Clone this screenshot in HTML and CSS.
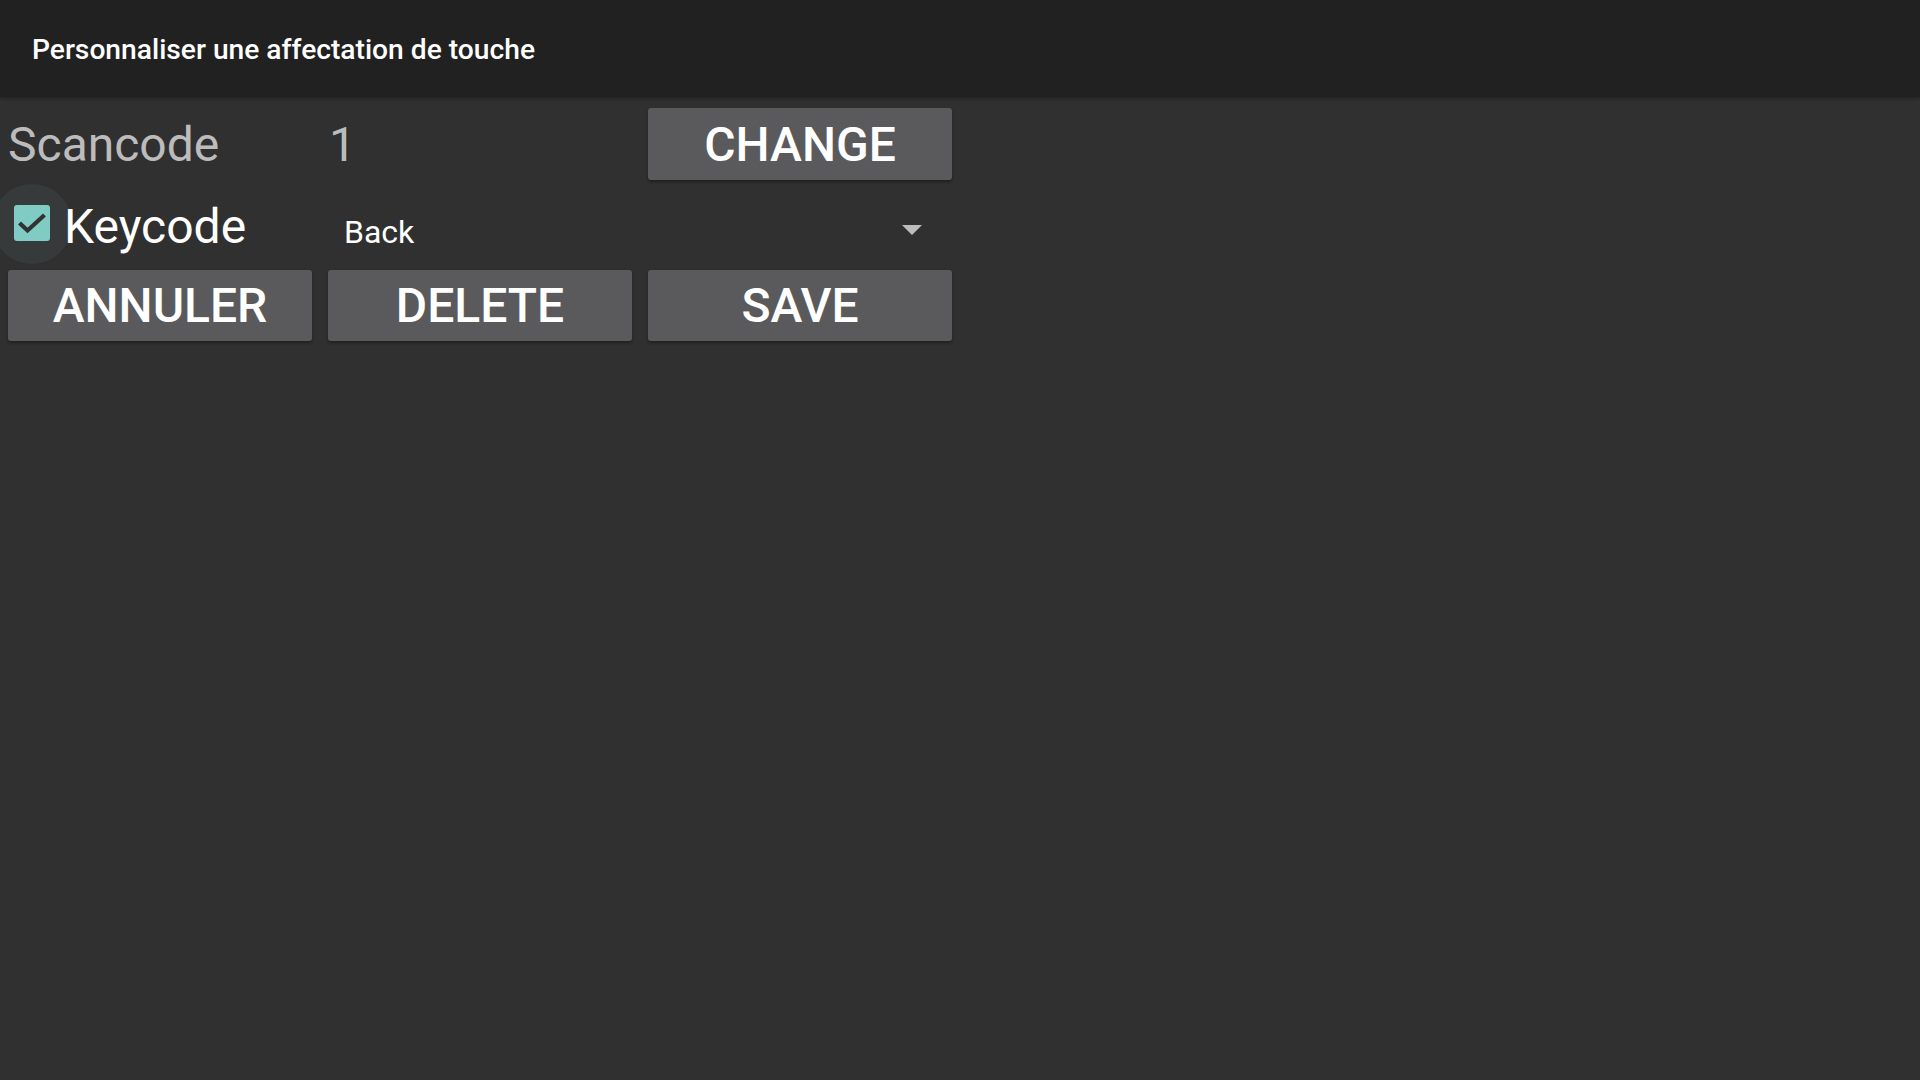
FILE: index.html
```html
<!DOCTYPE html>
<html lang="fr">
<head>
<meta charset="utf-8">
<title>Personnaliser une affectation de touche</title>
<link rel="stylesheet" href="styles.css">
</head>
<body>
<header class="appbar">
  <h1 class="appbar-title">Personnaliser une affectation de touche</h1>
</header>
<main class="form">
  <div class="row row-scan">
    <div class="label label-muted">Scancode</div>
    <div class="value">1</div>
    <button class="btn">CHANGE</button>
  </div>
  <div class="row row-key">
    <label class="check">
      <span class="ripple"></span>
      <span class="box">
        <svg viewBox="0 0 36 36" width="36" height="36"><path d="M5.5 18 L13.5 25.5 L30.5 10" fill="none" stroke="#323232" stroke-width="4.2"/></svg>
      </span>
      <span class="label">Keycode</span>
    </label>
    <div class="spinner">
      <span class="spinner-text">Back</span>
      <span class="arrow"></span>
    </div>
  </div>
  <div class="row row-actions">
    <button class="btn">ANNULER</button>
    <button class="btn">DELETE</button>
    <button class="btn">SAVE</button>
  </div>
</main>
</body>
</html>
```
FILE: styles.css
```css
* { box-sizing: border-box; }
html, body {
  margin: 0;
  padding: 0;
  width: 1920px;
  height: 1080px;
  background: #303030;
  font-family: Roboto, "Noto Sans", "Liberation Sans", sans-serif;
  overflow: hidden;
}
.appbar {
  height: 97px;
  background: #212121;
  display: flex;
  align-items: center;
  padding-left: 32px;
  box-shadow: 0 2px 3px rgba(0,0,0,0.25);
  position: relative;
  z-index: 1;
}
.appbar-title {
  margin: 0;
  padding-top: 2px;
  font-size: 28.2px;
  font-weight: 500;
  color: #ffffff;
  letter-spacing: 0;
}
.form {
  width: 960px;
  display: flex;
  flex-direction: column;
}
.row {
  display: grid;
  grid-template-columns: 320px 320px 320px;
  align-items: center;
}
.row-scan { height: 91px; padding-top: 1px; }
.row-key { height: 72px; }
.row-actions { height: 90px; }
.label {
  font-size: 48px;
  color: #ffffff;
  line-height: 1;
}
.label-muted {
  color: #bcbcbc;
  padding-left: 8px;
  padding-top: 4px;
}
.value {
  font-size: 48px;
  color: #bcbcbc;
  line-height: 1;
  padding-left: 9px;
  padding-top: 4px;
}
.btn {
  margin: 0 8px;
  height: 72px;
  border: none;
  border-radius: 3px;
  background: #5a5a5c;
  color: #ffffff;
  font-family: Roboto, "Noto Sans", "Liberation Sans", sans-serif;
  font-size: 48px;
  font-weight: 500;
  padding: 0;
  box-shadow: 0 2px 3px rgba(0,0,0,0.35);
}
.row-scan .btn { margin-top: 2px; }
.row-actions .btn { height: 71px; margin-top: 0; }
.check {
  position: relative;
  display: flex;
  align-items: center;
  height: 72px;
  padding-left: 14px;
}
.ripple {
  position: absolute;
  left: -8px;
  top: -4px;
  width: 80px;
  height: 80px;
  border-radius: 50%;
  background: #373a3a;
}
.box {
  position: relative;
  width: 36px;
  height: 36px;
  border-radius: 3px;
  background: #80cbc4;
  display: block;
  margin-right: 14px;
  margin-top: -2px;
}
.box svg { display: block; }
.check .label {
  position: relative;
  margin-top: 6px;
}
.spinner {
  grid-column: 2 / span 2;
  display: flex;
  align-items: center;
  justify-content: space-between;
  padding-left: 24px;
  padding-right: 38px;
  height: 72px;
}
.spinner-text {
  font-size: 32px;
  color: #ffffff;
  margin-top: 16px;
}
.arrow {
  width: 0;
  height: 0;
  border-left: 10px solid transparent;
  border-right: 10px solid transparent;
  border-top: 10px solid #bdbdbd;
  margin-top: 12px;
}
```
